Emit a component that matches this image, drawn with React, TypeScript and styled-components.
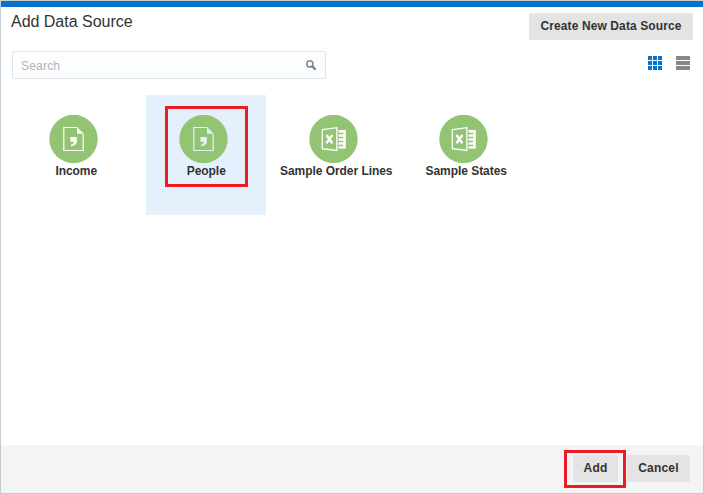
import React from 'react';
import styled, { createGlobalStyle } from 'styled-components';

const GlobalStyle = createGlobalStyle`
  * { box-sizing: border-box; }
  body { margin: 0; background: #fff; }
  button, input { font-family: inherit; }
`;

const Dialog = styled.div`
  width: 704px;
  height: 494px;
  display: flex;
  flex-direction: column;
  border: 1px solid #c3cdd7;
  border-top-color: #c5ced2;
  background: #fff;
  color: #333;
  font-family: 'Liberation Sans', Arial, sans-serif;
  overflow: hidden;
`;

const AccentBar = styled.div`
  flex: none;
  height: 6px;
  background: #0572ce;
`;

const Header = styled.header`
  flex: none;
  height: 44px;
  display: flex;
  justify-content: space-between;
  align-items: flex-start;
  padding: 6px 10px 0;
`;

const Title = styled.h1`
  margin: 0;
  font-size: 16px;
  line-height: 18px;
  font-weight: 400;
  letter-spacing: -0.02px;
  white-space: nowrap;
`;

const Button = styled.button<{ $width: number; $tracking?: number }>`
  flex: none;
  width: ${(p) => p.$width}px;
  height: 27px;
  padding: 0 0 2px;
  border: 0;
  border-radius: 2px;
  background: #e4e4e4;
  color: #333;
  font-size: 12px;
  line-height: 14px;
  font-weight: 700;
  letter-spacing: ${(p) => p.$tracking ?? 0.2}px;
  white-space: nowrap;
`;

const Toolbar = styled.div`
  flex: none;
  display: flex;
  justify-content: space-between;
  align-items: flex-start;
  padding: 0 13px 0 11px;
`;

const SearchBox = styled.label`
  width: 314px;
  height: 28px;
  display: flex;
  align-items: center;
  padding: 0 9px 0 8px;
  border: 1px solid #dfe4e7;
  border-radius: 2px;
  background: #fcfdfe;
`;

const SearchInput = styled.input`
  flex: 1;
  min-width: 0;
  padding: 1px 0 0;
  border: 0;
  outline: 0;
  background: transparent;
  font-size: 12px;
  letter-spacing: 0.2px;
  &::placeholder { color: #b3b3b3; opacity: 1; }
`;

const ViewSwitch = styled.div`
  display: flex;
  gap: 14px;
  padding-top: 5px;
  svg { display: block; }
`;

const Sources = styled.main`
  flex: 1;
  display: flex;
  align-items: flex-start;
  gap: 10px;
  padding: 16px 15px 0;
`;

const Tile = styled.div<{ $selected?: boolean }>`
  position: relative;
  width: 120px;
  height: 120px;
  display: flex;
  flex-direction: column;
  align-items: center;
  padding-top: 20px;
  background: ${(p) => (p.$selected ? '#e4f0fc' : 'transparent')};
  --ink: ${(p) => (p.$selected ? '#e4f0fc' : '#fff')};
  svg { display: block; margin-right: 5px; }
`;

const TileName = styled.span`
  padding-left: 0.5px;
  font-size: 12px;
  line-height: 14px;
  font-weight: 700;
  letter-spacing: -0.05px;
  white-space: nowrap;
`;

const Highlight = styled.div<{ $inset: string }>`
  position: absolute;
  inset: ${(p) => p.$inset};
  border: 3px solid #ed1c24;
  pointer-events: none;
`;

const Footer = styled.footer`
  flex: none;
  height: 48px;
  display: flex;
  justify-content: flex-end;
  gap: 9px;
  padding: 10px 13px 0 0;
  background: #f4f4f4;
`;

const Marked = styled.div`
  position: relative;
  display: flex;
  align-items: flex-start;
  height: 27px;
`;

const SearchIcon = () => (
  <svg width="10" height="10" viewBox="0 0 10 10" fill="none">
    <circle cx="3.9" cy="3.9" r="3.1" stroke="#858b91" strokeWidth="1.6" />
    <path d="M6.4 6.4 9.1 9.1" stroke="#7b8187" strokeWidth="2.2" strokeLinecap="round" />
  </svg>
);

const GridIcon = () => (
  <svg width="14" height="14" fill="#0572ce">
    {[0, 5, 10].map((y) =>
      [0, 5, 10].map((x) => <rect key={`${x}-${y}`} x={x} y={y} width="4" height="4" />),
    )}
  </svg>
);

const ListIcon = () => (
  <svg width="14" height="14" fill="#858887">
    {[0, 5, 10].map((y) => (
      <rect key={y} y={y} width="14" height="4" />
    ))}
  </svg>
);

const CsvIcon = () => (
  <svg width="49" height="49" viewBox="0 0 49 49">
    <circle cx="24.5" cy="24" r="24.2" fill="#93c473" />
    <path d="M28 12.5H14.8v23h19.4V19" fill="none" stroke="var(--ink)" strokeWidth="1.2" />
    <path d="M28 12l6.8 6.8H28z" fill="var(--ink)" />
    <path d="M21.4 22H27.8v4.6c0 2.8-2.2 4.5-5.8 4.8v-1.7c1.9-.3 2.8-1.2 2.9-2.9h-3.5z" fill="var(--ink)" />
  </svg>
);

const ExcelIcon = () => (
  <svg width="49" height="49" viewBox="0 0 49 49">
    <circle cx="24.5" cy="24" r="24.2" fill="#93c473" />
    <path d="M13.3 14.7 27.9 12.7V35.4L13.3 33.7z" fill="none" stroke="#fff" strokeWidth="1.3" />
    <path d="M17.4 20 23.4 28.2M23.4 20 17.4 28.2" stroke="#fff" strokeWidth="2.4" />
    <path d="M29.6 15H36.8V33.6H29.6z" fill="#fff" />
    <path d="M29 18.5h5.2M29 22.5h5.2M29 26.5h5.2M29 30.5h5.2" stroke="#93c473" strokeWidth="1.4" />
  </svg>
);

type Source = { name: string; kind: 'csv' | 'excel'; selected?: boolean };

const sources: Source[] = [
  { name: 'Income', kind: 'csv' },
  { name: 'People', kind: 'csv', selected: true },
  { name: 'Sample Order Lines', kind: 'excel' },
  { name: 'Sample States', kind: 'excel' },
];

export default function App() {
  return (
    <>
      <GlobalStyle />
      <Dialog>
        <AccentBar />
        <Header>
          <Title>Add Data Source</Title>
          <Button $width={164} $tracking={0.11}>Create New Data Source</Button>
        </Header>
        <Toolbar>
          <SearchBox>
            <SearchInput placeholder="Search" />
            <SearchIcon />
          </SearchBox>
          <ViewSwitch>
            <GridIcon />
            <ListIcon />
          </ViewSwitch>
        </Toolbar>
        <Sources>
          {sources.map((s) => (
            <Tile key={s.name} $selected={s.selected}>
              {s.kind === 'csv' ? <CsvIcon /> : <ExcelIcon />}
              <TileName>{s.name}</TileName>
              {s.selected && <Highlight $inset="11px 18px 28px 19px" />}
            </Tile>
          ))}
        </Sources>
        <Footer>
          <Marked>
            <Button $width={45}>Add</Button>
            <Highlight $inset="-5px -8px -6px -9px" />
          </Marked>
          <Button $width={63}>Cancel</Button>
        </Footer>
      </Dialog>
    </>
  );
}
